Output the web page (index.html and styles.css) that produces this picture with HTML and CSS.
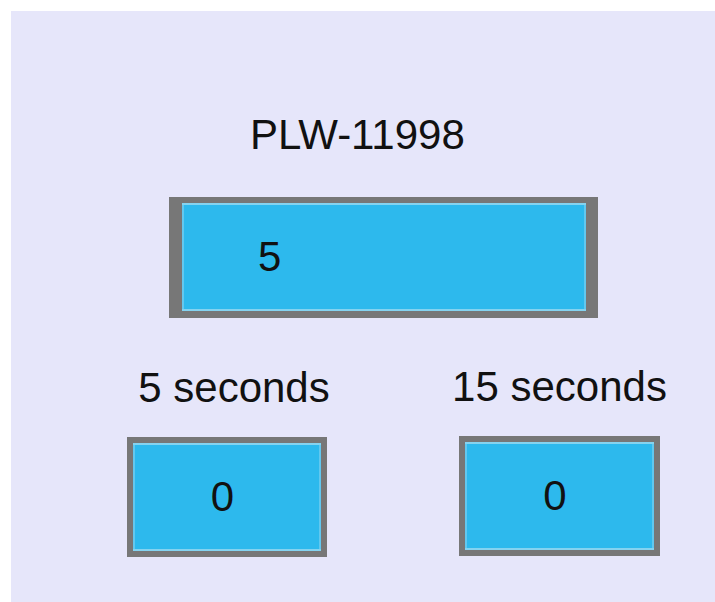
FILE: index.html
```html
<!DOCTYPE html>
<html lang="en">
<head>
  <meta charset="UTF-8" />
  <title>PLW-11998</title>
  <link rel="stylesheet" href="styles.css">
</head>
<body>

<div class="panel">
  <div class="title">PLW-11998</div>

  <div class="bigBox">5</div>

  <div class="timers">
    <div class="timer first">
      <div class="label">5 seconds</div>
      <div class="smallBox">0</div>
    </div>
    <div class="timer second">
      <div class="label">15 seconds</div>
      <div class="smallBox">0</div>
    </div>
  </div>
</div>

</body>
</html>
```

FILE: styles.css
```css
body {
  margin: 0;
  padding: 0;
  background: white;
  font-family: "Liberation Sans", Arial, sans-serif;
  color: #111;
}

.panel {
  margin: 11px 0 0 11px;
  height: 591px;
  background: #e6e6fa;
  overflow: hidden;
}

.title {
  padding-top: 100px;
  margin-left: 239px;
  font-size: 42px;
  line-height: 48px;
}

.bigBox {
  margin: 38px 0 0 158px;
  width: 328px;
  height: 108px;
  padding-left: 76px;
  background: #2db9ed;
  border-style: solid;
  border-color: #777777;
  border-width: 6px 12px 7px 13px;
  box-shadow: inset 0 2px 0 #84d3f0, inset 0 -2px 0 #84d3f0,
    inset 2px 0 0 #62c8ef, inset -2px 0 0 #62c8ef;
  font-size: 42px;
  line-height: 108px;
}

.timers {
  display: flex;
  align-items: flex-start;
  margin-top: 45px;
}

.timer {
  width: 200px;
}

.timer.first {
  margin-left: 116px;
  margin-top: 1px;
}

.timer.first .label {
  padding-left: 14px;
}

.timer.second {
  width: 201px;
  margin-left: 132px;
}

.label {
  margin: 0 -30px 25px;
  font-size: 42px;
  line-height: 48px;
  text-align: center;
  white-space: nowrap;
}

.smallBox {
  height: 108px;
  padding-right: 9px;
  background: #2db9ed;
  border: 6px solid #777777;
  box-shadow: inset 0 2px 0 #84d3f0, inset 0 -2px 0 #84d3f0,
    inset 2px 0 0 #62c8ef, inset -2px 0 0 #62c8ef;
  text-align: center;
  font-size: 42px;
  line-height: 108px;
}
```
